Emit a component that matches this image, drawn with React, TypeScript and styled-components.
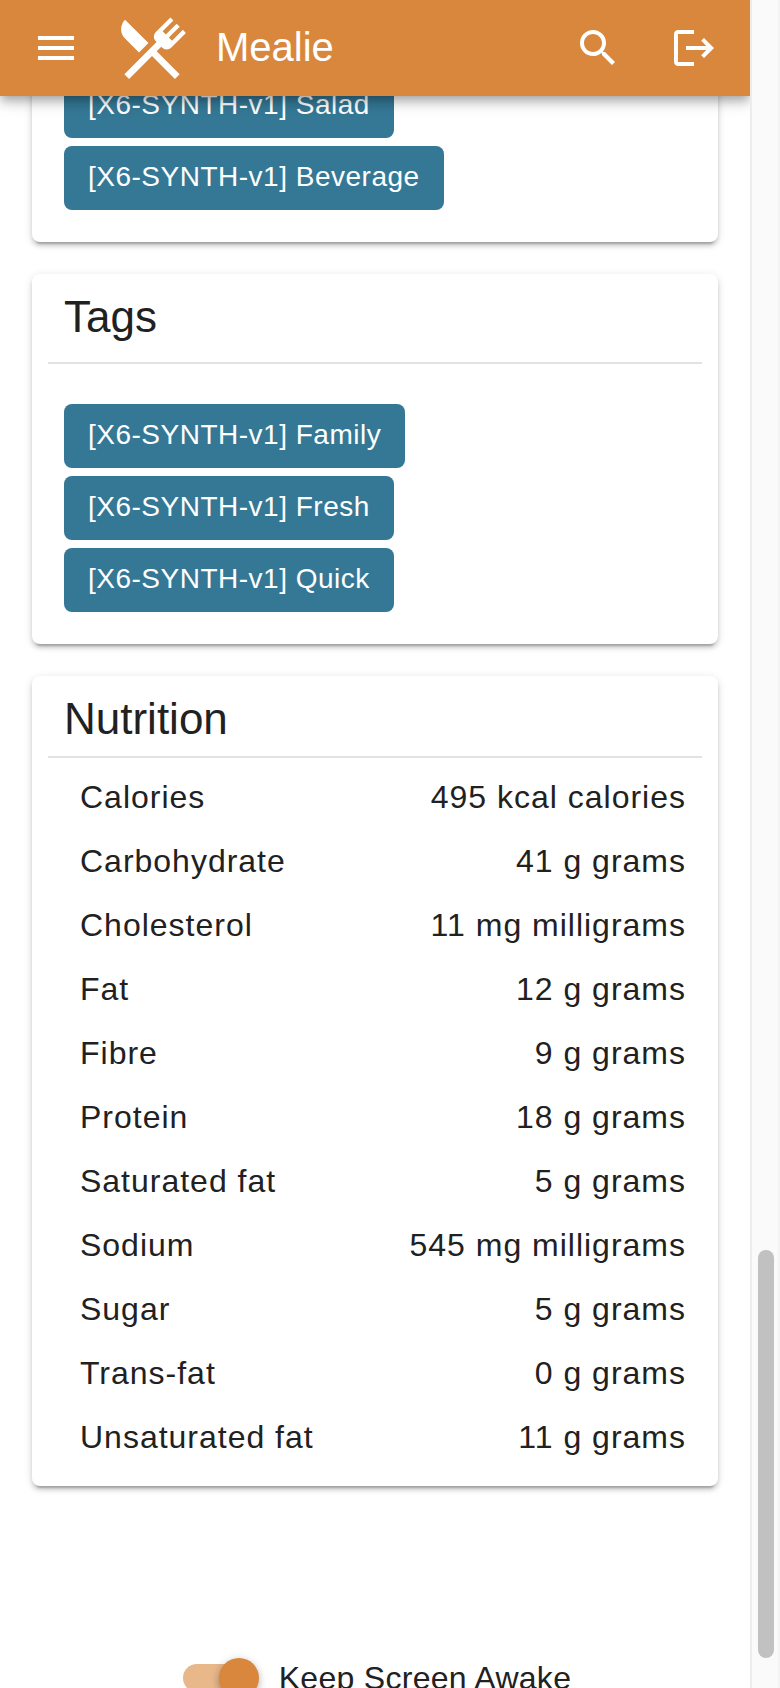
import React, { useState } from "react";
import styled, { createGlobalStyle } from "styled-components";

const GlobalStyle = createGlobalStyle`
  *, *::before, *::after { box-sizing: border-box; }
  body {
    margin: 0;
    background: #fff;
    color: #212121;
    font-family: "Liberation Sans", Arial, sans-serif;
    font-size: 32px;
  }
`;

const Shell = styled.div`
  display: flex;
  height: 100vh;
  overflow: hidden;
`;

const Page = styled.div`
  display: flex;
  flex: 1;
  flex-direction: column;
  min-width: 0;
  overflow: hidden;
`;

const AppBar = styled.header`
  position: relative;
  z-index: 2;
  display: flex;
  flex: none;
  align-items: center;
  height: 96px;
  padding: 0 8px;
  background: #d8873c;
  color: #fff;
  box-shadow: 0 4px 8px -2px rgba(0, 0, 0, 0.2), 0 8px 10px rgba(0, 0, 0, 0.14),
    0 2px 20px rgba(0, 0, 0, 0.12);
`;

const IconButton = styled.button`
  display: flex;
  align-items: center;
  justify-content: center;
  width: 96px;
  height: 96px;
  padding: 0;
  border: 0;
  background: none;
  color: inherit;
  cursor: pointer;
`;

const Brand = styled.a`
  display: flex;
  flex: 1;
  align-items: center;
  gap: 24px;
  padding-left: 8px;
  color: inherit;
  font-size: 40px;
  line-height: 48px;
  text-decoration: none;
`;

const BrandName = styled.span`
  padding-bottom: 2px;
`;

const Glyph = styled.svg<{ $size: number }>`
  display: block;
  flex: none;
  width: ${({ $size }) => $size}px;
  height: ${({ $size }) => $size}px;
  fill: currentColor;
`;

const Scroller = styled.main`
  flex: 1;
  min-height: 0;
  overflow: hidden;
`;

const Content = styled.div`
  display: flex;
  flex-direction: column;
  gap: 32px;
  margin-top: -22px;
  padding: 0 32px;
`;

const Card = styled.section`
  border-radius: 8px;
  background: #fff;
  box-shadow: 0 6px 2px -4px rgba(0, 0, 0, 0.2), 0 4px 4px rgba(0, 0, 0, 0.14),
    0 2px 10px rgba(0, 0, 0, 0.12);
`;

const CardTitle = styled.h2<{ $compact?: boolean }>`
  margin: 0 16px;
  padding: 16px 16px ${({ $compact }) => ($compact ? "10px" : "18px")};
  border-bottom: 2px solid #e2e2e2;
  font-size: 44px;
  font-weight: 400;
  line-height: 54px;
`;

const ChipList = styled.div<{ $spaced?: boolean }>`
  display: flex;
  flex-direction: column;
  align-items: flex-start;
  gap: 8px;
  padding: ${({ $spaced }) => ($spaced ? "40px" : "0")} 32px 32px;
`;

const Chip = styled.a`
  height: 64px;
  padding: 0 24px;
  border-radius: 8px;
  background: #357896;
  color: #fff;
  font-size: 28px;
  letter-spacing: 0.018em;
  line-height: 62px;
  text-decoration: none;
`;

const Facts = styled.table`
  width: 100%;
  border-collapse: collapse;
  letter-spacing: 0.031em;
  line-height: 48px;
`;

const FactsBody = styled.tbody`
  &::before,
  &::after {
    content: "";
    display: table-row;
    height: 8px;
  }
  &::after {
    height: 16px;
  }
`;

const FactName = styled.th`
  height: 64px;
  padding: 0 0 2px 48px;
  font-weight: 400;
  text-align: left;
`;

const FactValue = styled.td`
  padding: 0 32px 2px 0;
  text-align: right;
`;

const Unit = styled.span`
  margin-left: 10px;
`;

const SwitchRow = styled.label`
  display: flex;
  align-items: center;
  justify-content: center;
  gap: 20px;
  margin-top: 140px;
  padding-bottom: 32px;
  letter-spacing: 0.009em;
  line-height: 40px;
  cursor: pointer;
`;

const Switch = styled.input`
  position: relative;
  width: 80px;
  height: 40px;
  margin: 0;
  appearance: none;
  cursor: pointer;

  &::before {
    content: "";
    position: absolute;
    inset: 6px 4px;
    border-radius: 14px;
    background: #bdbdbd;
  }
  &::after {
    content: "";
    position: absolute;
    top: 0;
    left: 0;
    width: 40px;
    height: 40px;
    border-radius: 50%;
    background: #fff;
    box-shadow: 0 4px 8px -2px rgba(0, 0, 0, 0.2),
      0 2px 10px rgba(0, 0, 0, 0.2);
  }
  &:checked::before {
    background: #e8b78a;
  }
  &:checked::after {
    left: 40px;
    background: #d8873c;
  }
`;

const ScrollTrack = styled.div`
  display: flex;
  flex: none;
  flex-direction: column;
  justify-content: flex-end;
  width: 30px;
  padding: 0 4px 30px 6px;
  border-right: 2px solid #f3f3f3;
  border-left: 2px solid #ececec;
  background: #fafafa;
`;

const ScrollThumb = styled.div`
  width: 16px;
  height: 408px;
  border-radius: 8px;
  background: #c1c1c1;
`;

const icons = {
  menu: "M3,6H21V8H3V6M3,11H21V13H3V11M3,16H21V18H3V16Z",
  silverware:
    "M8.1,13.34L3.91,9.16C2.35,7.59 2.35,5.06 3.91,3.5L10.93,10.5L8.1,13.34M13.41,13L20.29,19.88L18.88,21.29L12,14.41L5.12,21.29L3.71,19.88L13.36,10.22L13.16,10C12.38,9.23 12.38,7.97 13.16,7.19L17.5,2.82L18.43,3.74L15.19,7L16.15,7.94L19.39,4.69L20.31,5.61L17.06,8.85L18,9.81L21.26,6.56L22.18,7.5L17.81,11.84C17.03,12.62 15.77,12.62 15,11.84L14.78,11.64L13.41,13Z",
  magnify:
    "M9.5,3A6.5,6.5 0 0,1 16,9.5C16,11.11 15.41,12.59 14.44,13.73L14.71,14H15.5L20.5,19L19,20.5L14,15.5V14.71L13.73,14.44C12.59,15.41 11.11,16 9.5,16A6.5,6.5 0 0,1 3,9.5A6.5,6.5 0 0,1 9.5,3M9.5,5C7,5 5,7 5,9.5C5,12 7,14 9.5,14C12,14 14,12 14,9.5C14,7 12,5 9.5,5Z",
  logout:
    "M17 7L15.59 8.41L18.17 11H8V13H18.17L15.59 15.58L17 17L22 12M4 5H12V3H4C2.9 3 2 3.9 2 5V19C2 20.1 2.9 21 4 21H12V19H4V5Z",
};

function Icon({ name, size = 48 }: { name: keyof typeof icons; size?: number }) {
  return (
    <Glyph $size={size} viewBox="0 0 24 24" aria-hidden="true">
      <path d={icons[name]} />
    </Glyph>
  );
}

const categories = ["Salad", "Beverage"];
const tags = ["Family", "Fresh", "Quick"];

const nutrition: [string, string, string][] = [
  ["Calories", "495", "kcal calories"],
  ["Carbohydrate", "41", "g grams"],
  ["Cholesterol", "11", "mg milligrams"],
  ["Fat", "12", "g grams"],
  ["Fibre", "9", "g grams"],
  ["Protein", "18", "g grams"],
  ["Saturated fat", "5", "g grams"],
  ["Sodium", "545", "mg milligrams"],
  ["Sugar", "5", "g grams"],
  ["Trans-fat", "0", "g grams"],
  ["Unsaturated fat", "11", "g grams"],
];

function Chips({ names, spaced }: { names: string[]; spaced?: boolean }) {
  return (
    <ChipList $spaced={spaced}>
      {names.map((name) => (
        <Chip key={name} href="#">
          {`[X6-SYNTH-v1] ${name}`}
        </Chip>
      ))}
    </ChipList>
  );
}

export default function App() {
  const [awake, setAwake] = useState(true);

  return (
    <Shell>
      <GlobalStyle />
      <Page>
        <AppBar>
          <IconButton type="button" aria-label="Menu">
            <Icon name="menu" />
          </IconButton>
          <Brand href="#">
            <Icon name="silverware" size={80} />
            <BrandName>Mealie</BrandName>
          </Brand>
          <IconButton type="button" aria-label="Search">
            <Icon name="magnify" />
          </IconButton>
          <IconButton type="button" aria-label="Log out">
            <Icon name="logout" />
          </IconButton>
        </AppBar>
        <Scroller>
          <Content>
            <Card>
              <Chips names={categories} />
            </Card>
            <Card>
              <CardTitle>Tags</CardTitle>
              <Chips names={tags} spaced />
            </Card>
            <Card>
              <CardTitle $compact>Nutrition</CardTitle>
              <Facts>
                <FactsBody>
                  {nutrition.map(([name, amount, unit]) => (
                    <tr key={name}>
                      <FactName scope="row">{name}</FactName>
                      <FactValue>
                        {amount}
                        <Unit>{unit}</Unit>
                      </FactValue>
                    </tr>
                  ))}
                </FactsBody>
              </Facts>
            </Card>
            <SwitchRow>
              <Switch
                type="checkbox"
                role="switch"
                checked={awake}
                onChange={(event) => setAwake(event.target.checked)}
              />
              Keep Screen Awake
            </SwitchRow>
          </Content>
        </Scroller>
      </Page>
      <ScrollTrack aria-hidden="true">
        <ScrollThumb />
      </ScrollTrack>
    </Shell>
  );
}
